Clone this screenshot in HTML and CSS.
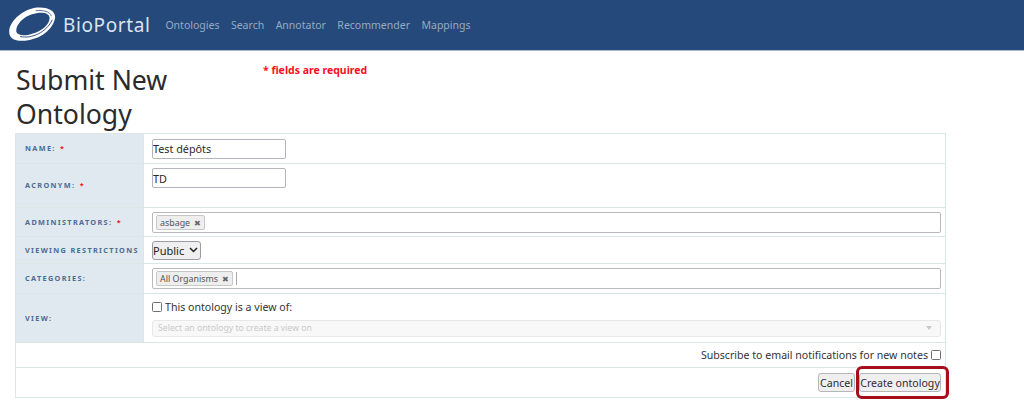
FILE: index.html
```html
<!DOCTYPE html>
<html lang="en">
<head>
<meta charset="utf-8">
<title>Submit New Ontology</title>
<link rel="stylesheet" href="styles.css">
</head>
<body>
<header class="nav">
  <svg class="logo" width="50" height="35" viewBox="0 0 52 38" aria-hidden="true">
    <path d="M2 31C-2 20 11 5 28 1C41 -1 52 3 51 12C49 24 36 34 22 36C12 38 4 36 2 31ZM9 27C10 31 18 32 26 29C37 26 46 18 45 11C44 6 35 5 26 8C16 11 8 20 9 27Z" fill="#fff" fill-rule="evenodd"/>
    <path d="M13 32C26 35 42 27 48 14" fill="none" stroke="#24497a" stroke-width="1"/>
    <path d="M30 4C38 3 46 5 47 10" fill="none" stroke="#24497a" stroke-width=".8"/>
  </svg>
  <span class="brand">BioPortal</span>
  <nav class="links">
    <a>Ontologies</a><a>Search</a><a>Annotator</a><a>Recommender</a><a>Mappings</a>
  </nav>
</header>
<main class="page">
  <div class="head">
    <h1>Submit New Ontology</h1>
    <p class="required">* fields are required</p>
  </div>
  <table class="form">
    <tr class="r-name">
      <th>Name: <i>*</i></th>
      <td><input class="text" value="Test dépôts"></td>
    </tr>
    <tr class="r-acro">
      <th>Acronym: <i>*</i></th>
      <td class="top"><input class="text" value="TD"></td>
    </tr>
    <tr class="r-admin">
      <th>Administrators: <i>*</i></th>
      <td><div class="chosen"><span class="tag">asbage <b>✖</b></span></div></td>
    </tr>
    <tr class="r-view">
      <th>Viewing Restrictions</th>
      <td><span class="select">Public <svg width="9" height="6" viewBox="0 0 9 6"><path d="M1 1l3.5 3.5L8 1" fill="none" stroke="#222" stroke-width="1.5"/></svg></span></td>
    </tr>
    <tr class="r-cat">
      <th>Categories:</th>
      <td><div class="chosen"><span class="tag">All Organisms <b>✖</b></span><span class="caret"></span></div></td>
    </tr>
    <tr class="r-v">
      <th>View:</th>
      <td>
        <label class="check"><span class="box"></span>This ontology is a view of:</label>
        <div class="disabled"><span>Select an ontology to create a view on</span><em></em></div>
      </td>
    </tr>
    <tr class="r-sub">
      <td colspan="2" class="end"><label class="check sub">Subscribe to email notifications for new notes<span class="box"></span></label></td>
    </tr>
    <tr class="r-btn">
      <td colspan="2" class="end">
        <div class="buttons">
          <span class="btn">Cancel</span>
          <span class="btn create">Create ontology<span class="ring"></span></span>
        </div>
      </td>
    </tr>
  </table>
</main>
</body>
</html>
```
FILE: styles.css
```css
* { box-sizing: border-box; }
html, body { margin: 0; height: 416px; overflow: hidden; }
body { background: #fff; color: #2a2a2a; font-family: "Noto Sans", "Open Sans", sans-serif; }

.nav { height: 51px; background: #24497a; border-bottom: 1px solid #a9bccf; display: flex; align-items: center; padding-left: 7px; }
.logo { flex: none; margin-top: -2px; }
.brand { margin-left: 6px; color: #dbe4ee; font-size: 19px; letter-spacing: .6px; }
.links { display: flex; gap: 11.5px; margin-left: 15px; }
.links a { color: #96aac4; font-size: 10.5px; }

.page { padding: 12px 0 0 15px; }
.head { display: flex; height: 70px; padding-left: 1px; }
h1 { margin: 0; width: 200px; font-size: 26.6px; font-weight: 400; line-height: 34px; color: #2b2b2b; }
.required { margin: 0 0 0 47px; padding-top: 0; color: #fb0d1b; font-size: 10.5px; font-weight: 700; line-height: 14px; }

.form { width: 931px; border-collapse: collapse; border: 1px solid #d9e7e6; table-layout: fixed; }
.form th { width: 128px; padding: 0 0 1px 9px; background: #e0e9ef; color: #4d6b92; font-size: 7.3px; font-weight: 700; letter-spacing: 1.35px; text-transform: uppercase; text-align: left; border: 1px solid #d9e7e6; white-space: nowrap; }
.form th i { color: #f01020; font-style: normal; margin-left: 1px; }
.form td { padding: 0 4px 0 8px; border: 1px solid #d9e7e6; vertical-align: middle; font-size: 11px; }
.form td.top { vertical-align: top; padding-top: 4px; }
.r-name { height: 30px; }
.r-acro { height: 44px; }
.r-admin { height: 29px; }
.r-view { height: 27px; }
.r-cat { height: 30px; }
.r-v { height: 49px; }
.r-sub { height: 25px; }
.r-btn { height: 30px; }

.text { display: block; width: 134px; height: 20px; padding: 0; border: 1px solid #b4b4bc; border-radius: 2px; font: 10.8px "Noto Sans", sans-serif; color: #2a2a2a; background: #fff; }
.chosen { display: flex; align-items: center; height: 21px; width: 789px; padding-left: 3px; border: 1px solid #b9b9bf; border-radius: 2px; background: #fff; }
.tag { display: inline-flex; align-items: center; height: 15px; padding: 0 3px; background: #eeeeee; border: 1px solid #c8c8c8; border-radius: 2px; color: #555; font-size: 8.9px; white-space: nowrap; }
.tag b { margin-left: 4px; font-size: 8px; color: #666; font-weight: 400; }
.caret { width: 1px; height: 13px; margin-left: 3px; background: #aaa; }
.select { display: inline-flex; align-items: center; gap: 5px; width: 49px; height: 19px; padding-left: 0; background: #efeff0; border: 1px solid #9c9ca4; border-radius: 3px; font-size: 11px; color: #222; }

.check { display: flex; align-items: center; color: #333; font-size: 10.6px; line-height: 14px; }
.box { flex: none; width: 10px; height: 10px; border: 1px solid #6f6f78; border-radius: 1.5px; background: #fff; margin-right: 3px; }
.sub { justify-content: flex-end; }
.sub .box { margin: 0 0 0 3px; }
.disabled { display: flex; align-items: center; justify-content: space-between; width: 789px; height: 17px; margin-top: 6px; padding: 0 8px 0 5px; border: 1px solid #e8e8e8; border-radius: 3px; background: #f8f8f8; color: #c9c9c9; font-size: 8.7px; }
.disabled em { width: 0; height: 0; border: 3px solid transparent; border-top: 4px solid #c9c9c9; border-bottom: 0; }

.end { text-align: right; }
.buttons { display: flex; justify-content: flex-end; gap: 0; }
.btn { position: relative; display: inline-flex; align-items: center; justify-content: center; height: 19px; padding: 0 1px; background: #efeff0; border: 1px solid #b5b5bb; border-radius: 3px; color: #2d2d2d; font-size: 10.6px; white-space: nowrap; }
.btn.create { width: 82px; margin-left: 4px; }
.ring { position: absolute; inset: -8px -9px -8px -4px; border: 3px solid #a50f1c; border-radius: 6px; }
```
